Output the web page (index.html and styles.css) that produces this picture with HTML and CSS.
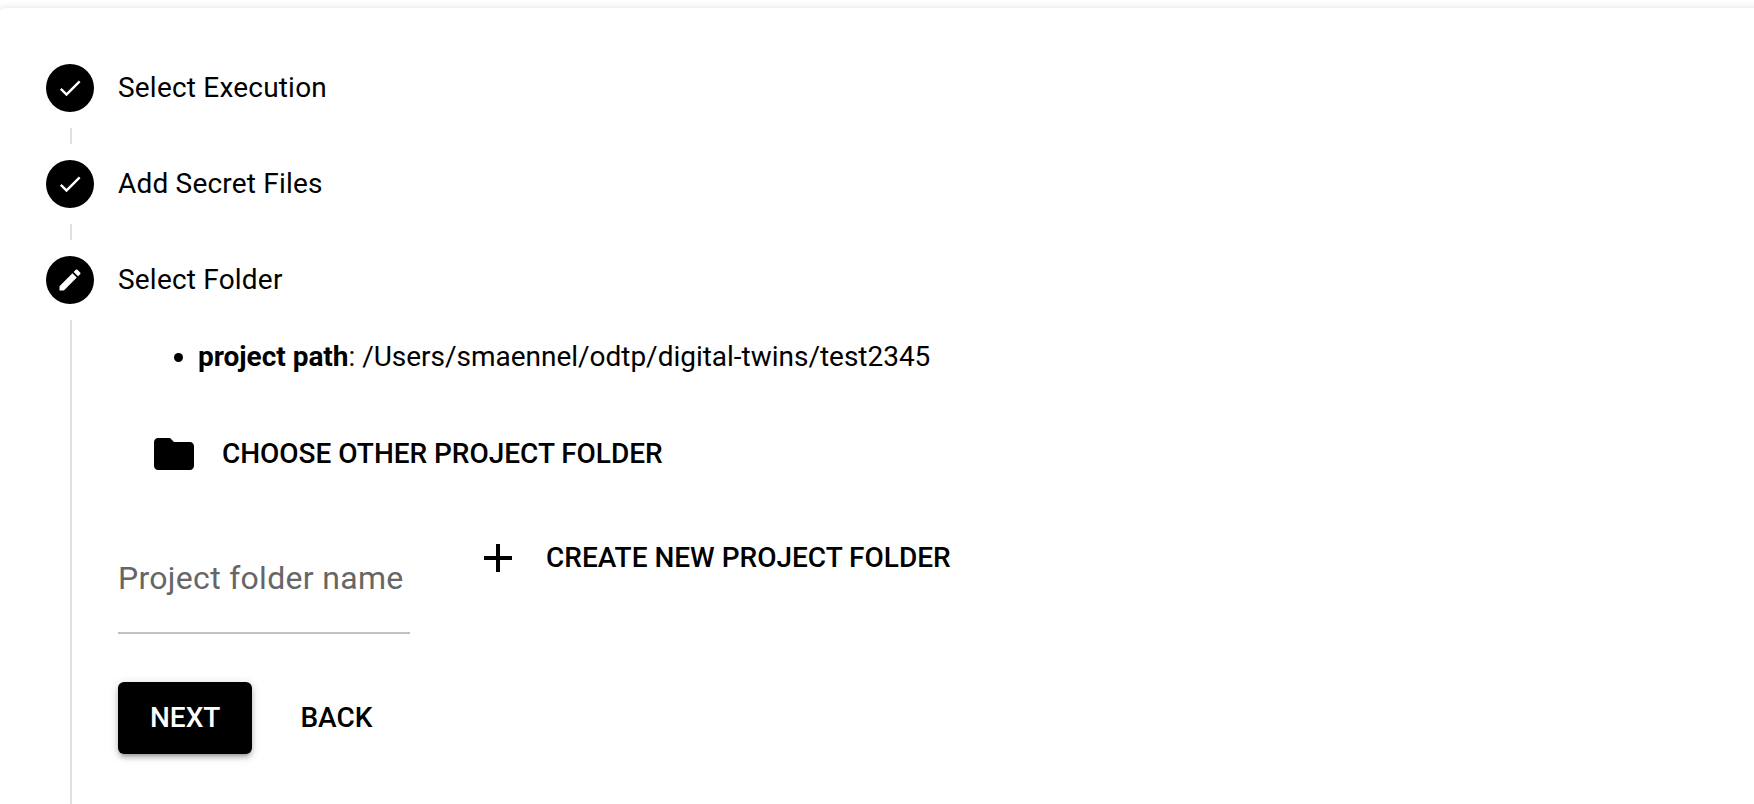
FILE: index.html
```
<!DOCTYPE html>
<html lang="en">
<head>
<meta charset="utf-8">
<title>Select Folder</title>
<link rel="stylesheet" href="styles.css">
</head>
<body>
<main class="stepper">
  <section class="step">
    <div class="rail"><span class="dot"><svg viewBox="0 0 24 24"><path d="M9 16.17L4.83 12l-1.42 1.41L9 19 21 7l-1.41-1.41z"/></svg></span><i class="line"></i></div>
    <h2 class="title">Select Execution</h2>
  </section>
  <section class="step">
    <div class="rail"><span class="dot"><svg viewBox="0 0 24 24"><path d="M9 16.17L4.83 12l-1.42 1.41L9 19 21 7l-1.41-1.41z"/></svg></span><i class="line"></i></div>
    <h2 class="title">Add Secret Files</h2>
  </section>
  <section class="step active">
    <div class="rail"><span class="dot"><svg viewBox="0 0 24 24"><path d="M3 17.25V21h3.75L17.81 9.94l-3.75-3.75L3 17.25zM20.71 7.04c.39-.39.39-1.02 0-1.41l-2.34-2.34c-.39-.39-1.02-.39-1.41 0l-1.83 1.83 3.75 3.75 1.83-1.83z"/></svg></span><i class="line"></i></div>
    <div class="content">
      <h2 class="title">Select Folder</h2>
      <ul class="details"><li><strong>project path</strong>: /Users/smaennel/odtp/digital-twins/test2345</li></ul>
      <button class="btn choose"><svg viewBox="0 0 24 24"><path d="M10 4H4c-1.1 0-1.99.9-1.99 2L2 18c0 1.1.9 2 2 2h16c1.1 0 2-.9 2-2V8c0-1.1-.9-2-2-2h-8l-2-2z"/></svg><span>Choose other project folder</span></button>
      <div class="create-row">
        <label class="field"><span>Project folder name</span></label>
        <button class="btn create"><svg viewBox="0 0 24 24"><path d="M19 13h-6v6h-2v-6H5v-2h6V5h2v6h6v2z"/></svg><span>Create new project folder</span></button>
      </div>
      <div class="nav">
        <button class="btn primary">Next</button>
        <button class="btn">Back</button>
      </div>
    </div>
  </section>
</main>
</body>
</html>
```
FILE: styles.css
```
* { box-sizing: border-box; }
body {
  margin: 0;
  height: 804px;
  padding-top: 8px;
  overflow: hidden;
  background: #fff;
  color: #000;
  font-family: Roboto, sans-serif;
  font-size: 28px;
}
.stepper {
  margin: 0 -40px 0 -2px;
  height: 796px;
  padding: 56px 48px 0;
  border-radius: 8px 8px 0 0;
  background: #fff;
  box-shadow: 0 2px 10px rgba(0,0,0,.2), 0 4px 4px rgba(0,0,0,.14), 0 6px 2px -4px rgba(0,0,0,.12);
  display: flex;
  flex-direction: column;
}
.step { display: flex; flex: none; gap: 24px; height: 96px; }
.step.active { flex: 1; height: auto; }
.rail { width: 48px; display: flex; flex-direction: column; align-items: center; }
.dot {
  width: 48px;
  height: 48px;
  flex: none;
  border-radius: 50%;
  background: #000;
  display: grid;
  place-items: center;
}
.dot svg { width: 28px; height: 28px; fill: #fff; }
.line { width: 2px; margin: 16px 0 16px 2px; flex: 1; background: #e0e0e0; }
.active .line { margin-bottom: 0; }
.title { margin: 0; font-size: 28px; font-weight: 400; line-height: 48px; letter-spacing: .2px; }
.content { display: flex; flex-direction: column; align-items: flex-start; }
.details { margin: 33px 0 0; padding: 0 0 0 80px; line-height: 40px; letter-spacing: -.02px; }
.btn {
  height: 72px;
  margin: 0;
  padding: 0 32px;
  border: 0;
  border-radius: 6px;
  background: transparent;
  color: #000;
  font: 500 28px/48px Roboto, sans-serif;
  text-transform: uppercase;
  white-space: nowrap;
  display: flex;
  align-items: center;
}
.btn svg { width: 48px; height: 48px; margin-right: 24px; }
.choose { margin-top: 41px; letter-spacing: -.03px; }
.create-row { display: flex; align-items: flex-start; gap: 32px; margin-top: 32px; }
.field {
  width: 292px;
  height: 112px;
  border-bottom: 2px solid #c2c2c2;
  color: #666;
  font-size: 32px;
  line-height: 40px;
  padding-top: 36px;
  letter-spacing: .3px;
  white-space: nowrap;
}
.nav { display: flex; gap: 16px; margin-top: 48px; }
.primary {
  background: #000;
  color: #fff;
  box-shadow: 0 2px 10px rgba(0,0,0,.2), 0 4px 4px rgba(0,0,0,.14), 0 6px 2px -4px rgba(0,0,0,.12);
}
```
